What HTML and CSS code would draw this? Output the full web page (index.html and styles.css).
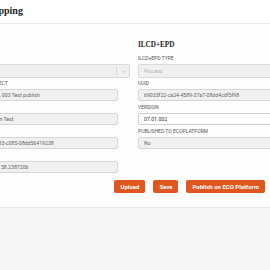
FILE: index.html
```html
<!DOCTYPE html>
<html lang="en">
<head>
    <meta charset="UTF-8">
    <meta name="viewport" content="width=device-width, initial-scale=1.0">
    <link rel="stylesheet" href="styles.css">
    <title>EPD Mapping</title>
</head>
<body>
    <header class="topbar">
        <div class="page">
            <h1 class="title">Mapping</h1>
        </div>
    </header>

    <main class="content">
        <div class="page">
            <div class="columns">
                <section class="col">
                    <h2 class="col-title">Source</h2>
                    <div class="field">
                        <label>EPD</label>
                        <div class="select">
                            <span class="select-value"></span>
                            <span class="select-sep"></span>
                            <svg class="chevron" viewBox="0 0 10 6" width="5" height="3">
                                <path d="M1 1l4 4 4-4" fill="none" stroke="#b5b5b5" stroke-width="1.4"/>
                            </svg>
                        </div>
                    </div>
                    <div class="field narrow">
                        <label>MAPPED PROJECT</label>
                        <input class="input" type="text" value="Mapping No. 003 Test publish" readonly>
                    </div>
                    <div class="field narrow">
                        <label>NAME</label>
                        <input class="input" type="text" value="ECO Platform Test" readonly>
                    </div>
                    <div class="field narrow">
                        <label>EPD ID</label>
                        <input class="input" type="text" value="f1e-8e2d-4a33-c085-08dd56419238" readonly>
                    </div>
                    <div class="field narrow">
                        <label>LOCATION</label>
                        <input class="input" type="text" value="15.5872410, 58.2387206" readonly>
                    </div>
                </section>

                <section class="col">
                    <h2 class="col-title">ILCD+EPD</h2>
                    <div class="field">
                        <label>ILCD+EPD TYPE</label>
                        <div class="select">
                            <span class="select-value muted">Process</span>
                        </div>
                    </div>
                    <div class="field">
                        <label>UUID</label>
                        <input class="input" type="text" value="69033f22-ca24-4589-37a7-08dd4cdf5f98" readonly>
                    </div>
                    <div class="field">
                        <label>VERSION</label>
                        <input class="input editable" type="text" value="07.01.002">
                    </div>
                    <div class="field">
                        <label>PUBLISHED TO ECOPLATFORM</label>
                        <input class="input" type="text" value="No" readonly>
                    </div>
                </section>
            </div>

            <div class="actions">
                <button class="btn">Upload</button>
                <button class="btn">Save</button>
                <button class="btn">Publish on ECO Platform</button>
            </div>
        </div>
    </main>

    <footer class="bottom"></footer>
</body>
</html>
```

FILE: styles.css
```css
*, body{
    box-sizing: border-box;
    margin: 0;
}
body{
    font-family: Roboto, 'Liberation Sans', sans-serif;
    background: #f6f6f6;
    color: #555;
    overflow: hidden;
}

.page{
    width: 480px;
    margin-left: -35px;
}

.topbar{
    height: 24px;
    background: #fff;
    border-bottom: 1px solid #e6e6e6;
    display: flex;
    align-items: center;
}
.title{
    font-family: 'Liberation Serif', serif;
    font-size: 10px;
    font-weight: bold;
    color: #1e1e1e;
    padding-left: 19px;
    padding-bottom: 2px;
}

.content{
    background: #fdfdfd;
    padding: 16px 0 14px;
    border-bottom: 1px solid #e8e8e8;
}

.columns{
    display: grid;
    grid-template-columns: 165px 1fr;
    column-gap: 8px;
}

.col-title{
    font-family: 'Liberation Serif', serif;
    font-size: 7.2px;
    font-weight: bold;
    color: #1e1e1e;
    line-height: 11px;
    margin-bottom: 3px;
}

.field{
    display: flex;
    flex-direction: column;
    gap: 2px;
    margin-bottom: 2px;
}
.field:nth-of-type(1){
    margin-bottom: 1px;
}
.field.narrow{
    margin-right: 12px;
}
.field label{
    font-size: 5px;
    line-height: 8px;
    color: #555;
}

.select{
    height: 14px;
    display: flex;
    align-items: center;
    background: #f0f0f0;
    border: 1px solid #d9d9d9;
    border-radius: 2px;
    padding-left: 5px;
}
.select-value{
    flex: 1;
    font-size: 5.2px;
    color: #555;
}
.select-value.muted{
    color: #b0b0b0;
}
.select-sep{
    width: 1px;
    height: 8px;
    background: #d6d6d6;
}
.chevron{
    margin: 0 3px 0 4px;
}

.input{
    height: 12px;
    width: 100%;
    background: #f0f0f0;
    border: 1px solid #d6d6d6;
    border-radius: 2px;
    padding: 0 5px;
    font-family: Roboto, 'Liberation Sans', sans-serif;
    font-size: 5.2px;
    color: #666;
    outline: none;
}
.input.editable{
    background: #fff;
    border-color: #cfcfcf;
    color: #333;
}

.actions{
    width: 300px;
    display: flex;
    justify-content: flex-end;
    gap: 8px;
    margin-top: 5px;
}
.btn{
    height: 13px;
    padding: 0 6px;
    background: #e0561f;
    border: 0;
    border-radius: 2px;
    color: #fff;
    font-family: Roboto, 'Liberation Sans', sans-serif;
    font-size: 6px;
    font-weight: bold;
}

.bottom{
    height: 80px;
    background: #f6f6f6;
}
```
